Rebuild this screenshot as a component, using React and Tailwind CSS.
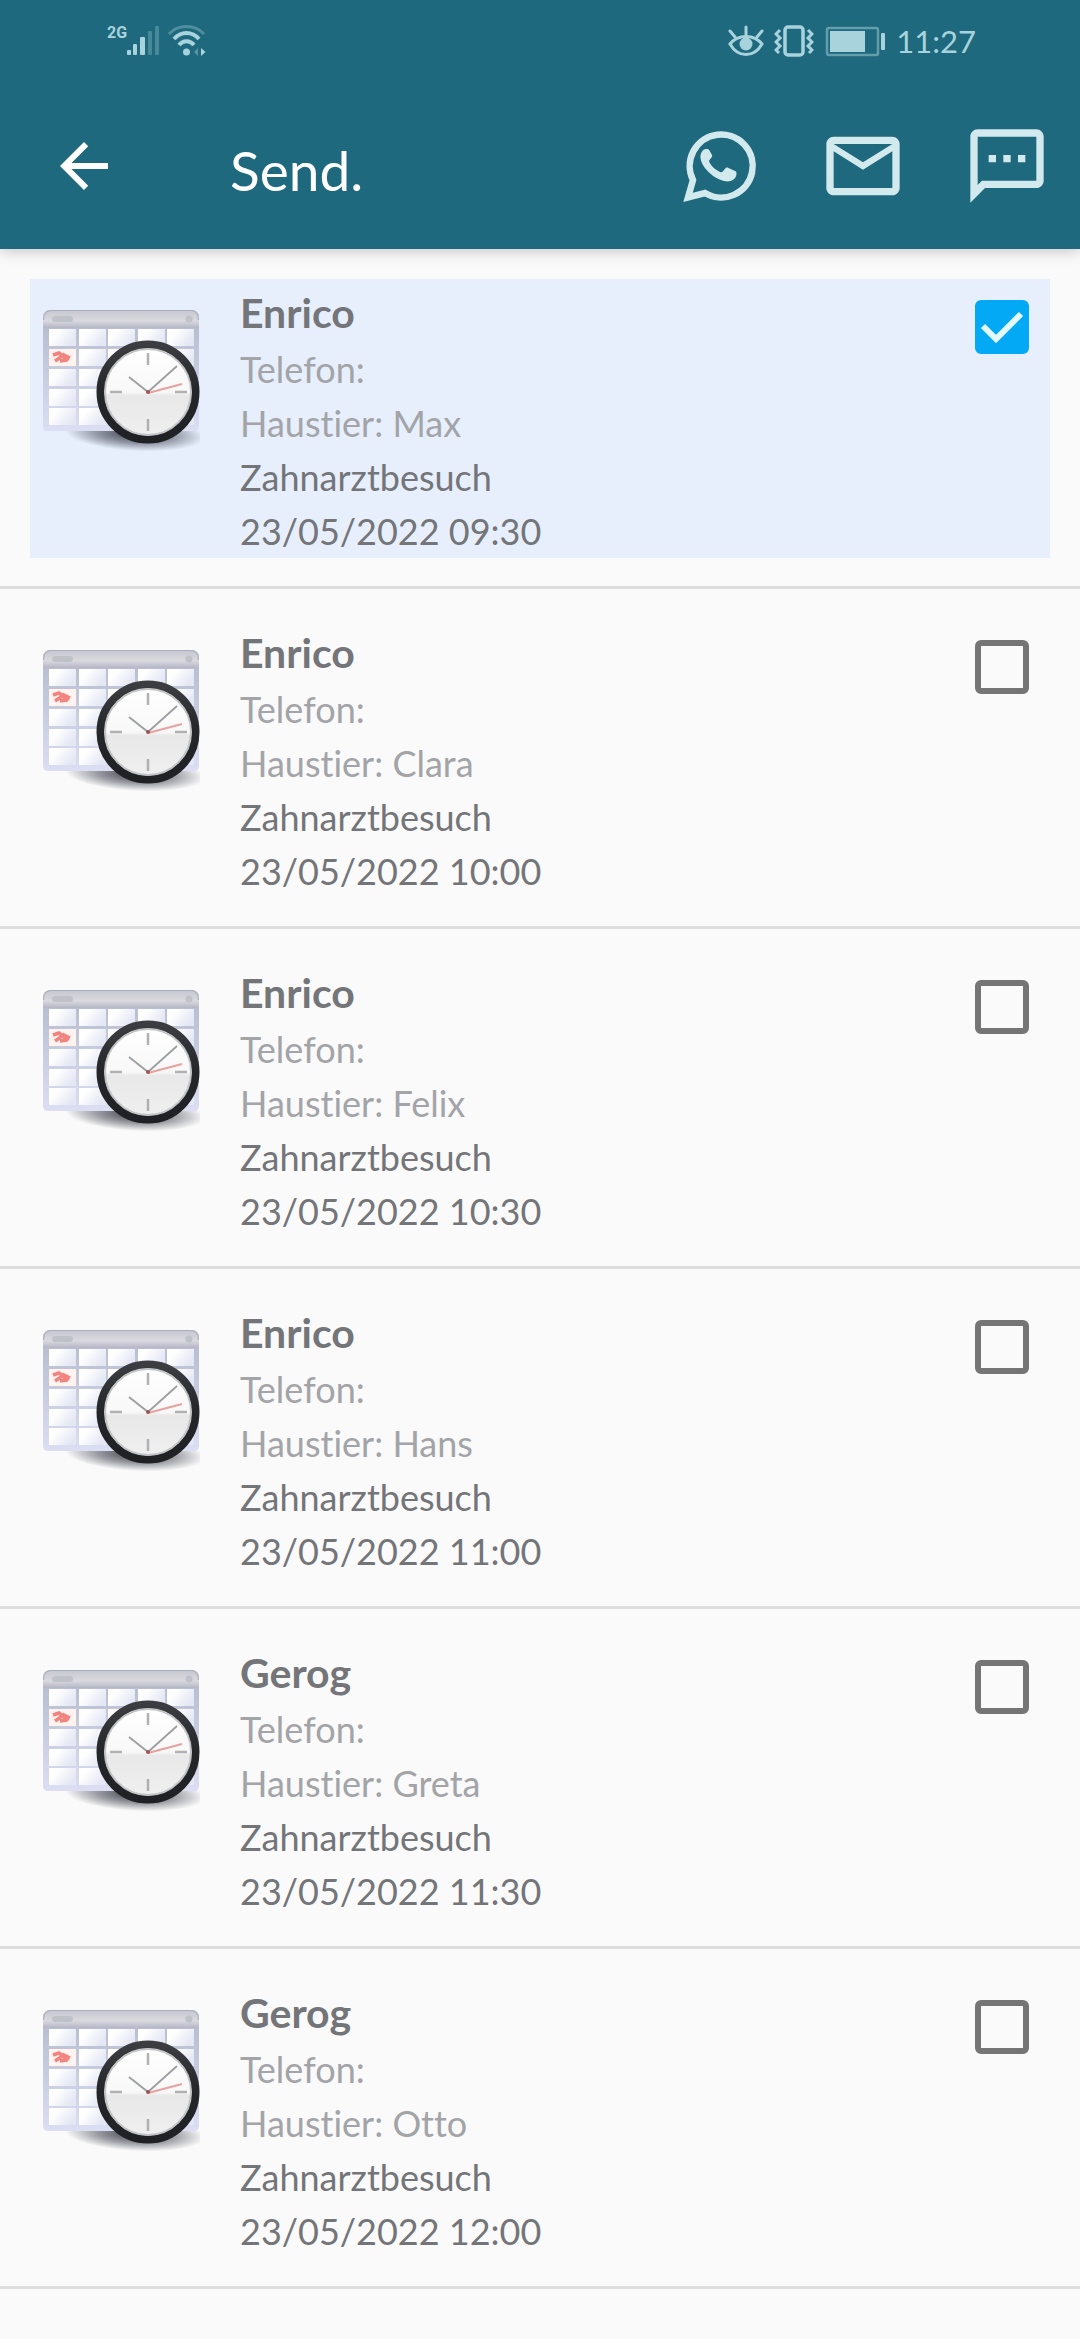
import { useId, useState } from "react";
import { MdArrowBack, MdMailOutline, MdOutlineSms } from "react-icons/md";

const APPOINTMENTS = [
  { id: 1, name: "Enrico", pet: "Max", date: "23/05/2022 09:30" },
  { id: 2, name: "Enrico", pet: "Clara", date: "23/05/2022 10:00" },
  { id: 3, name: "Enrico", pet: "Felix", date: "23/05/2022 10:30" },
  { id: 4, name: "Enrico", pet: "Hans", date: "23/05/2022 11:00" },
  { id: 5, name: "Gerog", pet: "Greta", date: "23/05/2022 11:30" },
  { id: 6, name: "Gerog", pet: "Otto", date: "23/05/2022 12:00" },
];

export default function App() {
  const [selected, setSelected] = useState([1]);

  const toggle = (id) =>
    setSelected((ids) => (ids.includes(id) ? ids.filter((i) => i !== id) : [...ids, id]));

  return (
    <div className="min-h-screen bg-[#fafafa] font-['Lato',sans-serif] [font-variant-ligatures:none]">
      <header className="relative bg-[#1e697d] shadow-[0_2px_14px_rgba(0,0,0,0.22)]">
        <StatusBar />
        <Toolbar />
      </header>

      <main>
        <ul>
          {APPOINTMENTS.map((a) => (
            <Appointment
              key={a.id}
              appointment={a}
              checked={selected.includes(a.id)}
              onToggle={() => toggle(a.id)}
            />
          ))}
        </ul>
      </main>
    </div>
  );
}

function StatusBar() {
  return (
    <div className="flex h-[82px] items-center justify-between pl-[107px] pr-[104px] text-[#a9d3dc]">
      <div className="flex items-center">
        <span className="self-start font-['Roboto',sans-serif] text-[16px] font-bold leading-[16px]">2G</span>
        <svg className="h-8 w-8" viewBox="0 0 32 32" fill="currentColor" aria-hidden="true">
          <rect x="0" y="25" width="4" height="5" rx="1" />
          <rect x="6" y="19" width="4" height="11" rx="1" />
          <rect x="13" y="12" width="5" height="18" rx="1" />
          <rect x="21" y="6" width="4" height="24" rx="1" opacity=".3" />
          <rect x="28" y="1" width="4" height="29" rx="1" opacity=".3" />
        </svg>
        <svg className="ml-2 h-8 w-10" viewBox="0 0 40 32" fill="none" stroke="currentColor" strokeWidth="4" aria-hidden="true">
          <path d="M2 9C11-1 28-1 37 9" strokeWidth="3" opacity=".35" />
          <path d="M7 14c7-8 18-8 25 0" />
          <path d="M12 20c4-5 11-5 15 0" />
          <circle cx="19.500" cy="27" r="3.500" fill="currentColor" stroke="none" />
          <path d="m31 23-4 4 4 4z" fill="currentColor" stroke="none" opacity=".4" />
          <path d="m34 23 4.500 4-4.500 4z" fill="currentColor" stroke="none" />
        </svg>
      </div>

      <div className="flex items-center gap-[10px]">
        <svg className="h-8 w-9" viewBox="0 0 36 32" fill="none" stroke="currentColor" strokeWidth="3" strokeLinecap="round" aria-hidden="true">
          <path d="M2 19c8-10 24-10 32 0-8 14-24 14-32 0z" />
          <circle cx="18" cy="19" r="6.500" fill="currentColor" stroke="none" />
          <path d="M18 10V2M7 12 2 6M29 12l5-6" />
        </svg>
        <svg className="h-8 w-10" viewBox="0 0 40 32" fill="none" stroke="currentColor" strokeWidth="3.500" aria-hidden="true">
          <rect x="11" y="2" width="18" height="28" rx="3" />
          <path d="m6 5-4 4 4 4-4 4 4 4-4 4 3 3M34 5l4 4-4 4 4 4-4 4 4 4-3 3" strokeWidth="3" />
        </svg>
        <svg className="h-8 w-[62px]" viewBox="0 0 62 32" aria-hidden="true">
          <rect x="3" y="3" width="51" height="27" rx="2" fill="none" stroke="currentColor" strokeWidth="2.500" opacity=".5" />
          <rect x="6" y="6" width="35" height="21" fill="currentColor" />
          <rect x="57" y="8" width="4" height="17" rx="1" fill="currentColor" />
        </svg>
        <time className="text-[31px] leading-[32px]">11:27</time>
      </div>
    </div>
  );
}

function Toolbar() {
  return (
    <div className="flex h-[167px] items-center pl-12 pr-[29px]">
      <button aria-label="Zurück" className="text-white">
        <MdArrowBack className="size-[72px]" />
      </button>
      <h1 className="ml-[110px] flex-1 pt-2 text-[55px] leading-[64px] text-white">Send.</h1>
      <div className="flex gap-14 text-[#d2e9ee]">
        <button aria-label="WhatsApp">
          <WhatsAppIcon />
        </button>
        <button aria-label="E-Mail">
          <MdMailOutline className="size-[88px]" />
        </button>
        <button aria-label="SMS">
          <MdOutlineSms className="size-[88px]" />
        </button>
      </div>
    </div>
  );
}

function Appointment({ appointment, checked, onToggle }) {
  const inputId = `appointment-${appointment.id}`;

  return (
    <li className="border-b-3 border-[#dedede] px-[30px] pb-7 pt-[30px]">
      <div className={`flex items-start pl-[10px] pr-[21px] ${checked ? "bg-[#e7effd]" : ""}`}>
        <CalendarClock />
        <label htmlFor={inputId} className="ml-10 flex-1 text-[36px] leading-[54px] text-[#737579]">
          <span className="block pt-[5px] text-[41px] font-bold leading-[58px]">{appointment.name}</span>
          <span className="block text-[#a2a4a8]">Telefon:</span>
          <span className="block text-[#a2a4a8]">Haustier: {appointment.pet}</span>
          <span className="block">Zahnarztbesuch</span>
          <span className="block">{appointment.date}</span>
        </label>
        <div className="mt-[21px] grid size-[54px]">
          <input
            id={inputId}
            type="checkbox"
            checked={checked}
            onChange={onToggle}
            className="col-start-1 row-start-1 size-full appearance-none rounded-[6px] border-6 border-[#757575] checked:border-[#03a9f4] checked:bg-[#03a9f4]"
          />
          {checked && (
            <svg
              className="pointer-events-none col-start-1 row-start-1 size-full"
              viewBox="0 0 54 54"
              fill="none"
              stroke="#e4f8ff"
              strokeWidth="6"
              aria-hidden="true"
            >
              <path d="m8 26 13 13 25-25" />
            </svg>
          )}
        </div>
      </div>
    </li>
  );
}

function WhatsAppIcon() {
  return (
    <svg className="size-[88px]" viewBox="0 0 88 88" fill="none" aria-hidden="true">
      <path
        d="M13 75.500l5-17.500A31.500 31.500 0 1 1 30 71z"
        stroke="currentColor"
        strokeWidth="6.500"
      />
      <path
        d="M31 27c-3 0-6 4-5.500 9 1 9 12 20 23.500 23 6 1.500 12-1 12.500-7 .2-2-.5-2.500-2-3.200l-6-2.800c-1.500-.7-2.500-.5-3.500.8l-2.200 2.700c-.8 1-1.600 1-2.800.4-5-2.400-8-5.400-10.500-9.500-.7-1.200-.4-1.900.4-2.800l1.600-2c.8-1 .8-1.800.4-2.800l-2.600-4.500c-.6-1.200-1.400-1.300-3.300-1.300z"
        fill="currentColor"
      />
    </svg>
  );
}

const COLUMNS = [9, 39, 68, 98, 127];
const ROWS = [29, 49, 69, 89, 108];

function CalendarClock() {
  const id = useId();

  return (
    <svg className="mt-[21px] size-[160px]" viewBox="0 0 160 160" aria-hidden="true">
      <defs>
        <linearGradient id={`${id}bar`} x2="0" y2="1">
          <stop offset="0" stopColor="#c6c7cf" />
          <stop offset=".6" stopColor="#d9d9de" />
          <stop offset="1" stopColor="#b4b6c6" />
        </linearGradient>
        <linearGradient id={`${id}page`} x2="0" y2="1">
          <stop offset="0" stopColor="#b4b8cb" />
          <stop offset="1" stopColor="#dcdff3" />
        </linearGradient>
        <linearGradient id={`${id}cell`} x2="1" y2=".5">
          <stop offset=".3" stopColor="#fff" />
          <stop offset="1" stopColor="#e4e7f4" />
        </linearGradient>
        <linearGradient id={`${id}rim`} x2="0" y2="1">
          <stop offset="0" stopColor="#3b3d40" />
          <stop offset=".5" stopColor="#242629" />
          <stop offset="1" stopColor="#202124" />
        </linearGradient>
        <linearGradient id={`${id}face`} x2="0" y2="1">
          <stop offset="0" stopColor="#fff" />
          <stop offset=".5" stopColor="#f8f8f8" />
          <stop offset=".54" stopColor="#e8e8e9" />
          <stop offset="1" stopColor="#f0f0f0" />
        </linearGradient>
        <radialGradient id={`${id}shadow`}>
          <stop offset="0" stopColor="#23252d" stopOpacity=".9" />
          <stop offset=".55" stopColor="#3c3f4c" stopOpacity=".5" />
          <stop offset="1" stopColor="#3c3f4c" stopOpacity="0" />
        </radialGradient>
      </defs>

      <ellipse cx="95" cy="134" rx="70" ry="17" fill={`url(#${id}shadow)`} transform="rotate(3 95 134)" />

      <path d="M3 18q0-8 8-8h140q8 0 8 8v108q0 5-5 5H8q-5 0-5-5z" fill={`url(#${id}page)`} />
      <path d="M3 28V18q0-8 8-8h140q8 0 8 8v10z" fill={`url(#${id}bar)`} />
      <path d="M3.500 20q0-9.500 8-9.500h139q8 0 8 9.500" fill="none" stroke="#a9acba" />
      <rect x="12" y="16" width="21" height="6" rx="3" fill="#c0c2c9" />
      <circle cx="149" cy="19" r="3.500" fill="#c0c2c9" />
      {ROWS.map((y) =>
        COLUMNS.map((x) => (
          <rect key={`${x}-${y}`} x={x} y={y} width="27" height="17" fill={`url(#${id}cell)`} />
        ))
      )}
      <rect x="9" y="49" width="27" height="17" fill="#fff3ef" />
      <path d="m13 55 6-2 9 8M15 61l6-4M22 54l8 4M20 61l7-1" fill="none" stroke="#f3837f" strokeWidth="3.500" />

      <circle cx="108" cy="92" r="47.500" fill={`url(#${id}face)`} stroke={`url(#${id}rim)`} strokeWidth="8" />
      <circle cx="108" cy="92" r="43" fill="none" stroke="#c3c4c6" strokeWidth="2" />
      <path d="M108 53v12M108 119v12M70 92h12M135 92h12" stroke="#b0b1b3" strokeWidth="2.500" />
      <path d="M89 77l19 15 29-26" fill="none" stroke="#9c9fa1" strokeWidth="1.800" />
      <path d="m108 93 34-9" stroke="#e9a0a0" strokeWidth="2" />
      <circle cx="108" cy="92" r="2" fill="#a05555" />
    </svg>
  );
}
